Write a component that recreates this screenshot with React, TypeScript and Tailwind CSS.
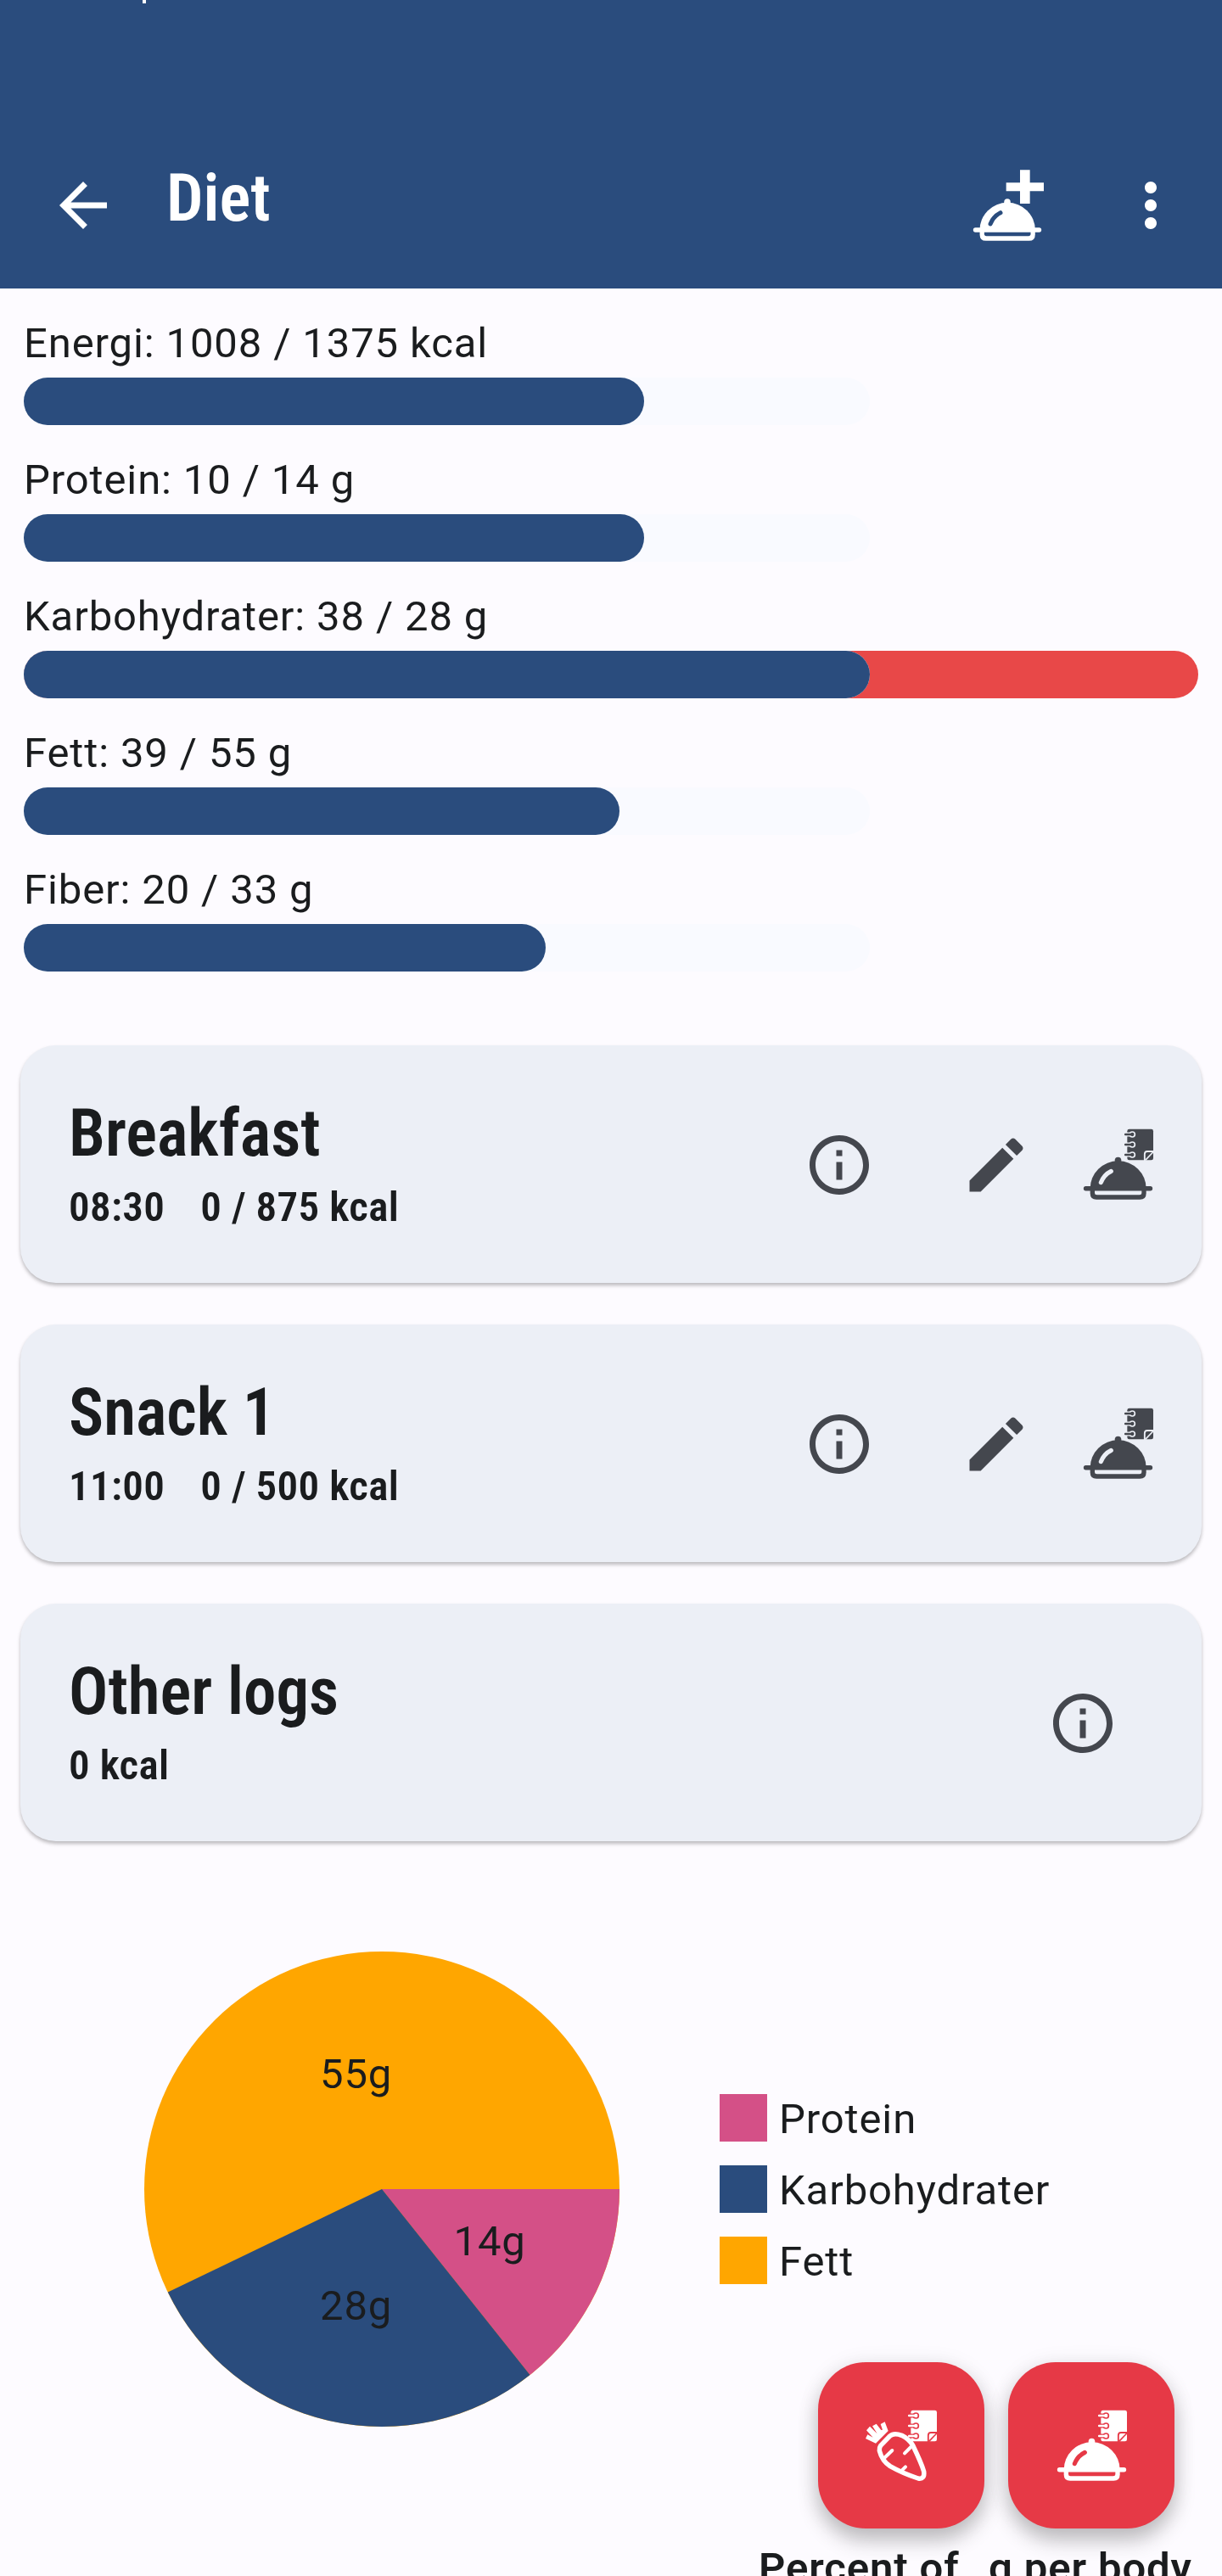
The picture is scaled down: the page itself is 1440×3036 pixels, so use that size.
import { useId } from "react";

type Nutrient = { label: string; fill: number; over?: boolean };

const nutrients: Nutrient[] = [
  { label: "Energi: 1008 / 1375 kcal", fill: 731 },
  { label: "Protein: 10 / 14 g", fill: 731 },
  { label: "Karbohydrater: 38 / 28 g", fill: 997, over: true },
  { label: "Fett: 39 / 55 g", fill: 702 },
  { label: "Fiber: 20 / 33 g", fill: 615 },
];

const legend = [
  { label: "Protein", swatch: "bg-[#d45087]" },
  { label: "Karbohydrater", swatch: "bg-[#2a4c7d]" },
  { label: "Fett", swatch: "bg-[#ffa600]" },
];

function MaterialIcon({ d }: { d: string }) {
  return (
    <svg viewBox="0 0 24 24" className="h-[84px] w-[84px] shrink-0" fill="currentColor">
      <path d={d} />
    </svg>
  );
}

const BACK = "M20 11H7.83l5.59-5.59L12 4l-8 8 8 8 1.41-1.41L7.83 13H20v-2z";
const MORE =
  "M12 8c1.1 0 2-.9 2-2s-.9-2-2-2-2 .9-2 2 .9 2 2 2zm0 2c-1.1 0-2 .9-2 2s.9 2 2 2 2-.9 2-2-.9-2-2-2zm0 6c-1.1 0-2 .9-2 2s.9 2 2 2 2-.9 2-2-.9-2-2-2z";
const INFO =
  "M11 7h2v2h-2zm0 4h2v6h-2zm1-9C6.48 2 2 6.48 2 12s4.48 10 10 10 10-4.48 10-10S17.52 2 12 2zm0 18c-4.41 0-8-3.59-8-8s3.59-8 8-8 8 3.59 8 8-3.59 8-8 8z";
const EDIT =
  "M3 17.25V21h3.75L17.81 9.94l-3.75-3.75L3 17.25zM20.71 7.04c.39-.39.39-1.02 0-1.41l-2.34-2.34c-.39-.39-1.02-.39-1.41 0l-1.83 1.83 3.75 3.75 1.83-1.83z";

/* Serving dish with a domed lid, a glint and a hollow tray. */
function Cloche({ transform }: { transform?: string }) {
  const id = useId();
  return (
    <g transform={transform}>
      <mask id={id} maskUnits="userSpaceOnUse" x="50" y="20" width="270" height="270">
        <rect x="50" y="20" width="270" height="270" fill="white" />
        <path d="M127 220Q138 192 163 180" fill="none" stroke="black" strokeWidth="15.5" strokeLinecap="round" />
        <path d="M105 249.500H271V256Q271 263.500 263 263.500H113Q105 263.500 105 256Z" fill="black" />
      </mask>
      <g mask={`url(#${id})`} fill="currentColor">
        <path d="M176 149V142A11.500 12 0 0 1 199 142V149Z" />
        <path d="M89 241A99 97.500 0 0 1 287 241Z" />
        <rect x="65.500" y="233" width="244" height="16.500" rx="8" />
        <path d="M89 241H287V258Q287 280.500 265 280.500H111Q89 280.500 89 258Z" />
      </g>
    </g>
  );
}

/* Small spiral notebook with a folded corner. */
function Notebook() {
  const id = useId();
  const rings = [50, 86, 122];
  return (
    <g>
      <mask id={id} maskUnits="userSpaceOnUse" x="200" y="20" width="120" height="130">
        <rect x="200" y="20" width="120" height="130" fill="white" />
        {rings.map((y) => (
          <g key={y}>
            <path d={`M212 ${y}H238`} stroke="black" strokeWidth="15" />
            <circle cx="238" cy={y} r="11.500" fill="black" />
          </g>
        ))}
        <path d="M281.500 143V120Q281.500 110 291 110H314" fill="none" stroke="black" strokeWidth="5.500" />
        <path d="M284 141L311 113" stroke="black" strokeWidth="5" />
      </mask>
      <rect x="220" y="31.500" width="92" height="109.500" rx="7" fill="currentColor" mask={`url(#${id})`} />
      {rings.map((y) => (
        <g key={y} fill="currentColor">
          <rect x="210" y={y - 4} width="30" height="8" rx="3" />
          <circle cx="238" cy={y} r="6.500" />
        </g>
      ))}
    </g>
  );
}

function Carrot() {
  return (
    <g fill="none" stroke="currentColor" strokeLinecap="round" strokeLinejoin="round">
      <path
        strokeWidth="16.500"
        d="M113 156L146 122Q160 109 188 120Q214 133 227 155C240 182 258 220 266 247Q270 276 246 272C215 262 170 242 147 229Q118 210 109 174Q108 163 113 156Z"
      />
      <path strokeWidth="12" d="M154 173L126 200M220 161L198 183M201 231L188 244" />
      <path
        stroke="none"
        fill="currentColor"
        d="M96 148L60 131L67 117L86 127L63 102L75 88L101 114L84 87L98 79L115 101L120 100L113 80L128 72L140 104Z"
      />
    </g>
  );
}

function BoxIcon({ children }: { children: React.ReactNode }) {
  return (
    <svg viewBox="60 29 252 252" className="h-[84px] w-[84px] shrink-0 overflow-visible">
      {children}
    </svg>
  );
}

function MealCard({ title, time, energy }: { title: string; time?: string; energy: string }) {
  return (
    <section className="flex h-[280px] items-center rounded-[42px] bg-[#eceff6] pl-[57px] text-[#44474e] shadow-[0_3px_4px_rgba(0,0,0,0.26)]">
      <div className="flex-1 self-start pt-[60px] font-['Roboto_Condensed',Roboto,sans-serif] font-semibold text-[#1a1c1e]">
        <h2 className="text-[77px] leading-[88px] tracking-normal">{title}</h2>
        <p className="flex gap-[42px] text-[49px] leading-[86px] tracking-[0.35px]">
          {time && <span>{time}</span>}
          <span>{energy}</span>
        </p>
      </div>
      {time ? (
        <>
          <div className="mt-0.5 mr-[101px]">
            <MaterialIcon d={INFO} />
          </div>
          <div className="mt-0.5 mr-[59px]">
            <MaterialIcon d={EDIT} />
          </div>
          <div className="mr-[57px]">
            <BoxIcon>
              <Cloche />
              <Notebook />
            </BoxIcon>
          </div>
        </>
      ) : (
        <div className="mt-0.5 mr-[98px]">
          <MaterialIcon d={INFO} />
        </div>
      )}
    </section>
  );
}

function Fab({ children }: { children: React.ReactNode }) {
  return (
    <button className="flex h-[196px] w-[196px] items-center justify-center rounded-[56px] bg-[#e63946] text-white shadow-[0_14px_24px_rgba(0,0,0,0.24),0_2px_28px_rgba(0,0,0,0.07)]">
      <BoxIcon>{children}</BoxIcon>
    </button>
  );
}

export default function App() {
  return (
    <div className="relative h-[3036px] w-[1440px] overflow-hidden bg-[#fdfbff] font-['Roboto',sans-serif] text-[49px] tracking-[0.875px] text-[#1a1c1e]">
      <header className="h-[340px] bg-[#2a4c7d] text-white">
        <div className="ml-[168px] h-1 w-1 bg-white" />
        <div className="mt-[196px] flex pr-[42px] pl-14">
          <MaterialIcon d={BACK} />
          <h1 className="ml-14 flex-1 font-['Roboto_Condensed',Roboto,sans-serif] text-[77px] leading-[68px] font-semibold tracking-normal">
            Diet
          </h1>
          <div className="mr-[84px]">
            <BoxIcon>
              <Cloche transform="translate(-2.2 3.4) scale(0.988)" />
              <path d="M228 30H263V75H312V105H263V149H228V105H179V75H228Z" fill="currentColor" />
            </BoxIcon>
          </div>
          <MaterialIcon d={MORE} />
        </div>
      </header>

      <section className="flex flex-col gap-8 px-7 pt-8">
        {nutrients.map((n) => (
          <div key={n.label}>
            <p className="leading-[66px]">{n.label}</p>
            <div className={n.over ? "mt-[7px] rounded-full bg-[#e84848]" : "mt-[7px]"}>
              <div className="h-14 w-[997px] rounded-full bg-[#f9faff]">
                <div className="h-14 rounded-full bg-[#2a4c7d]" style={{ width: n.fill }} />
              </div>
            </div>
          </div>
        ))}
      </section>

      <main className="mt-[87px] flex flex-col gap-[49px] px-6">
        <MealCard title="Breakfast" time="08:30" energy="0 / 875 kcal" />
        <MealCard title="Snack 1" time="11:00" energy="0 / 500 kcal" />
        <MealCard title="Other logs" energy="0 kcal" />
      </main>

      <section className="mt-[130px] flex items-center gap-[118px] pl-[170px]">
        <svg viewBox="-280 -280 560 560" className="h-[560px] w-[560px]">
          <circle r="280" fill="#ffa600" />
          <path d="M0 0H280A280 280 0 0 1 174.500 219Z" fill="#d45087" />
          <path d="M0 0L174.500 219A280 280 0 0 1 -252.200 121.500Z" fill="#2a4c7d" />
          <g fill="#1a1c1e">
            <text x="-73" y="-119">55g</text>
            <text x="84.500" y="77.500">14g</text>
            <text x="-73" y="153.500">28g</text>
          </g>
        </svg>
        <ul className="flex flex-col gap-7">
          {legend.map((l) => (
            <li key={l.label} className="flex h-14 gap-[14px]">
              <span className={`h-14 w-14 ${l.swatch}`} />
              <span className="leading-[59px]">{l.label}</span>
            </li>
          ))}
        </ul>
      </section>

      <div className="mt-[132px] flex pl-[894px] leading-[70px] font-semibold whitespace-nowrap">
        <span className="w-[271px]">Percent of</span>
        <span>g per body</span>
      </div>

      <div className="absolute right-14 bottom-14 flex gap-7">
        <Fab>
          <Notebook />
          <Carrot />
        </Fab>
        <Fab>
          <Cloche />
          <Notebook />
        </Fab>
      </div>
    </div>
  );
}
